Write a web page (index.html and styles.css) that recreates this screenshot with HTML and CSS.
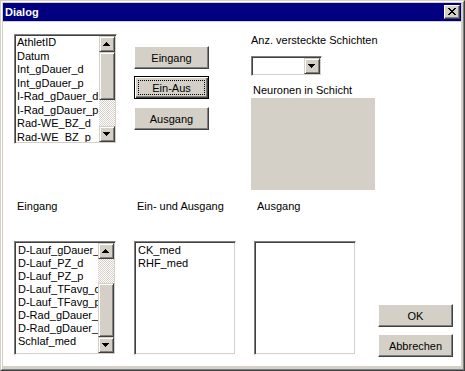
FILE: index.html
```html
<!DOCTYPE html>
<html lang="de">
<head>
    <meta charset="UTF-8">
    <meta name="viewport" content="width=device-width, initial-scale=1.0">
    <title>Dialog</title>
    <link rel="stylesheet" href="styles.css">
</head>
<body>
    <div class="window">
        <div class="frame">
            <div class="titlebar">
                <span class="title">Dialog</span>
                <div class="close-btn">
                    <svg class="glyph-x" width="8" height="7" viewBox="0 0 8 7" shape-rendering="crispEdges">
                        <path d="M0 0h2v1h-2zM6 0h2v1h-2zM1 1h2v1h-2zM5 1h2v1h-2zM2 2h4v1h-4zM3 3h2v1h-2zM2 4h4v1h-4zM1 5h2v1h-2zM5 5h2v1h-2zM0 6h2v1h-2zM6 6h2v1h-2z"/>
                    </svg>
                </div>
            </div>
            <div class="client">
                <div class="upper">
                    <div class="listbox listbox-top">
                        <ul class="items items-top">
                            <li>AthletID</li>
                            <li>Datum</li>
                            <li>Int_gDauer_d</li>
                            <li>Int_gDauer_p</li>
                            <li>I-Rad_gDauer_d</li>
                            <li>I-Rad_gDauer_p</li>
                            <li>Rad-WE_BZ_d</li>
                            <li>Rad-WE_BZ_p</li>
                            <li>Rad-WE_F_p</li>
                        </ul>
                        <div class="scrollbar">
                            <div class="sb-btn">
                                <svg class="arrow" width="7" height="4" viewBox="0 0 7 4" shape-rendering="crispEdges"><path d="M3 0h1v1h-1zM2 1h3v1h-3zM1 2h5v1h-5zM0 3h7v1h-7z"/></svg>
                            </div>
                            <div class="sb-thumb thumb-top"></div>
                            <div class="sb-track"></div>
                            <div class="sb-btn">
                                <svg class="arrow" width="7" height="4" viewBox="0 0 7 4" shape-rendering="crispEdges"><path d="M0 0h7v1h-7zM1 1h5v1h-5zM2 2h3v1h-3zM3 3h1v1h-1z"/></svg>
                            </div>
                        </div>
                    </div>
                    <div class="move-buttons">
                        <div class="btn">Eingang</div>
                        <div class="btn btn-default"><span class="focus-ring">Ein-Aus</span></div>
                        <div class="btn btn-last">Ausgang</div>
                    </div>
                    <div class="layers">
                        <span class="layers-label">Anz. versteckte Schichten</span>
                        <div class="combo">
                            <div class="combo-btn">
                                <svg class="arrow" width="7" height="4" viewBox="0 0 7 4" shape-rendering="crispEdges"><path d="M0 0h7v1h-7zM1 1h5v1h-5zM2 2h3v1h-3zM3 3h1v1h-1z"/></svg>
                            </div>
                        </div>
                        <div class="neuron-label">Neuronen in Schicht</div>
                        <div class="neuron-box"></div>
                    </div>
                </div>
                <div class="lower">
                    <div class="col-label">Eingang</div>
                    <div class="col-label">Ein- und Ausgang</div>
                    <div class="col-label">Ausgang</div>
                    <div></div>

                    <div class="listbox listbox-bottom">
                        <ul class="items">
                            <li>D-Lauf_gDauer_d</li>
                            <li>D-Lauf_PZ_d</li>
                            <li>D-Lauf_PZ_p</li>
                            <li>D-Lauf_TFavg_d</li>
                            <li>D-Lauf_TFavg_p</li>
                            <li>D-Rad_gDauer_d</li>
                            <li>D-Rad_gDauer_p</li>
                            <li>Schlaf_med</li>
                        </ul>
                        <div class="scrollbar">
                            <div class="sb-btn">
                                <svg class="arrow" width="7" height="4" viewBox="0 0 7 4" shape-rendering="crispEdges"><path d="M3 0h1v1h-1zM2 1h3v1h-3zM1 2h5v1h-5zM0 3h7v1h-7z"/></svg>
                            </div>
                            <div class="sb-track track-bottom"></div>
                            <div class="sb-thumb thumb-bottom"></div>
                            <div class="sb-btn">
                                <svg class="arrow" width="7" height="4" viewBox="0 0 7 4" shape-rendering="crispEdges"><path d="M0 0h7v1h-7zM1 1h5v1h-5zM2 2h3v1h-3zM3 3h1v1h-1z"/></svg>
                            </div>
                        </div>
                    </div>
                    <div class="listbox listbox-bottom">
                        <ul class="items">
                            <li>CK_med</li>
                            <li>RHF_med</li>
                        </ul>
                    </div>
                    <div class="listbox listbox-bottom">
                        <ul class="items"></ul>
                    </div>
                    <div class="dialog-buttons">
                        <div class="btn">OK</div>
                        <div class="btn">Abbrechen</div>
                    </div>
                </div>
            </div>
        </div>
    </div>
</body>
</html>
```

FILE: styles.css
```css
body {
    margin: 0;
    font-family: "Liberation Sans", Arial, sans-serif;
    font-size: 11px;
    color: #000;
}
.window {
    width: 465px;
    height: 371px;
    box-sizing: border-box;
    border: 1px solid;
    border-color: #d4d0c8 #404040 #404040 #d4d0c8;
    background-color: #d4d0c8;
}
.frame {
    height: 100%;
    box-sizing: border-box;
    border: 1px solid;
    border-color: #fff #808080 #808080 #fff;
    padding: 1px 2px 3px 1px;
    display: flex;
    flex-direction: column;
}
.titlebar {
    height: 18px;
    flex-shrink: 0;
    background-color: #000080;
    color: #fff;
    display: flex;
    align-items: center;
    justify-content: space-between;
    padding: 0 1px 0 2px;
    margin-bottom: 1px;
}
.title {
    font-weight: bold;
    line-height: 18px;
}
.close-btn {
    width: 16px;
    height: 14px;
    box-sizing: border-box;
    background-color: #d4d0c8;
    border: 1px solid;
    border-color: #fff #404040 #404040 #fff;
    box-shadow: inset -1px -1px #808080, inset 1px 1px #d4d0c8;
}
.glyph-x {
    display: block;
    margin: 2px 0 0 3px;
}
.client {
    flex: 1;
    background-color: #fff;
    padding: 12px 0 0 11px;
}
.upper {
    display: flex;
    align-items: flex-start;
}

/* list boxes */
.listbox {
    box-sizing: border-box;
    border: 1px solid;
    border-color: #808080 #fff #fff #808080;
    box-shadow: inset 1px 1px #404040, inset -1px -1px #d4d0c8;
    padding: 1px;
    background-color: #fff;
    display: flex;
}
.listbox-top {
    width: 103px;
    height: 110px;
}
.listbox-bottom {
    width: 102px;
    height: 114px;
}
.items {
    flex: 1;
    min-width: 0;
    margin: 0;
    padding: 1px 0 0 2px;
    list-style: none;
    overflow: hidden;
}
.items li {
    line-height: 13px;
    white-space: nowrap;
    overflow: hidden;
}
.items-top {
    padding: 0 0 0 1px;
}
.items-top li {
    line-height: 13.5px;
}
.scrollbar {
    width: 16px;
    flex-shrink: 0;
    display: flex;
    flex-direction: column;
}
.sb-btn,
.sb-thumb,
.combo-btn {
    box-sizing: border-box;
    background-color: #d4d0c8;
    border: 1px solid;
    border-color: #d4d0c8 #404040 #404040 #d4d0c8;
    box-shadow: inset 1px 1px #fff, inset -1px -1px #808080;
}
.sb-btn {
    height: 16px;
    flex-shrink: 0;
}
.arrow {
    display: block;
    margin: 5px 0 0 3px;
}
.sb-track {
    flex: 1;
    background: repeating-conic-gradient(#d4d0c8 0 25%, #fff 0 50%) 0 0 / 2px 2px;
}
.thumb-top {
    height: 48px;
}
.track-bottom {
    flex: none;
    height: 24px;
}
.thumb-bottom {
    flex: 1;
}

/* buttons */
.move-buttons {
    margin-left: 17px;
    padding-top: 12px;
    display: flex;
    flex-direction: column;
    gap: 7px;
}
.btn {
    width: 75px;
    height: 23px;
    box-sizing: border-box;
    background-color: #d4d0c8;
    border: 1px solid;
    border-color: #fff #404040 #404040 #fff;
    box-shadow: inset -1px -1px #808080, inset 1px 1px #d4d0c8;
    display: flex;
    align-items: center;
    justify-content: center;
}
.btn-default {
    border-color: #000;
    box-shadow: inset 1px 1px #fff, inset -1px -1px #404040, inset -2px -2px #808080;
}
.btn-last {
    margin-top: 1px;
}
.focus-ring {
    flex: 1;
    align-self: stretch;
    margin: 3px;
    border: 1px dotted #000;
    display: flex;
    align-items: center;
    justify-content: center;
}

/* hidden layers */
.layers {
    margin-left: 42px;
}
.layers-label {
    display: block;
    line-height: 13px;
}
.combo {
    margin-top: 9px;
    width: 71px;
    height: 20px;
    box-sizing: border-box;
    border: 1px solid;
    border-color: #808080 #fff #fff #808080;
    box-shadow: inset 1px 1px #404040, inset -1px -1px #d4d0c8;
    padding: 1px;
    background-color: #fff;
    display: flex;
    justify-content: flex-end;
}
.combo-btn {
    width: 16px;
    height: 16px;
}
.neuron-label {
    margin-top: 7px;
    line-height: 15px;
    padding-left: 2px;
}
.neuron-box {
    width: 124px;
    height: 92px;
    background-color: #d4d0c8;
}

/* lower lists */
.lower {
    margin-top: 10px;
    display: grid;
    grid-template-columns: repeat(3, 102px) 79px;
    column-gap: 18px;
    row-gap: 28px;
}
.col-label {
    line-height: 13px;
    padding-left: 3px;
}
.dialog-buttons {
    justify-self: end;
    padding-top: 63px;
    display: flex;
    flex-direction: column;
    gap: 7px;
}
```
